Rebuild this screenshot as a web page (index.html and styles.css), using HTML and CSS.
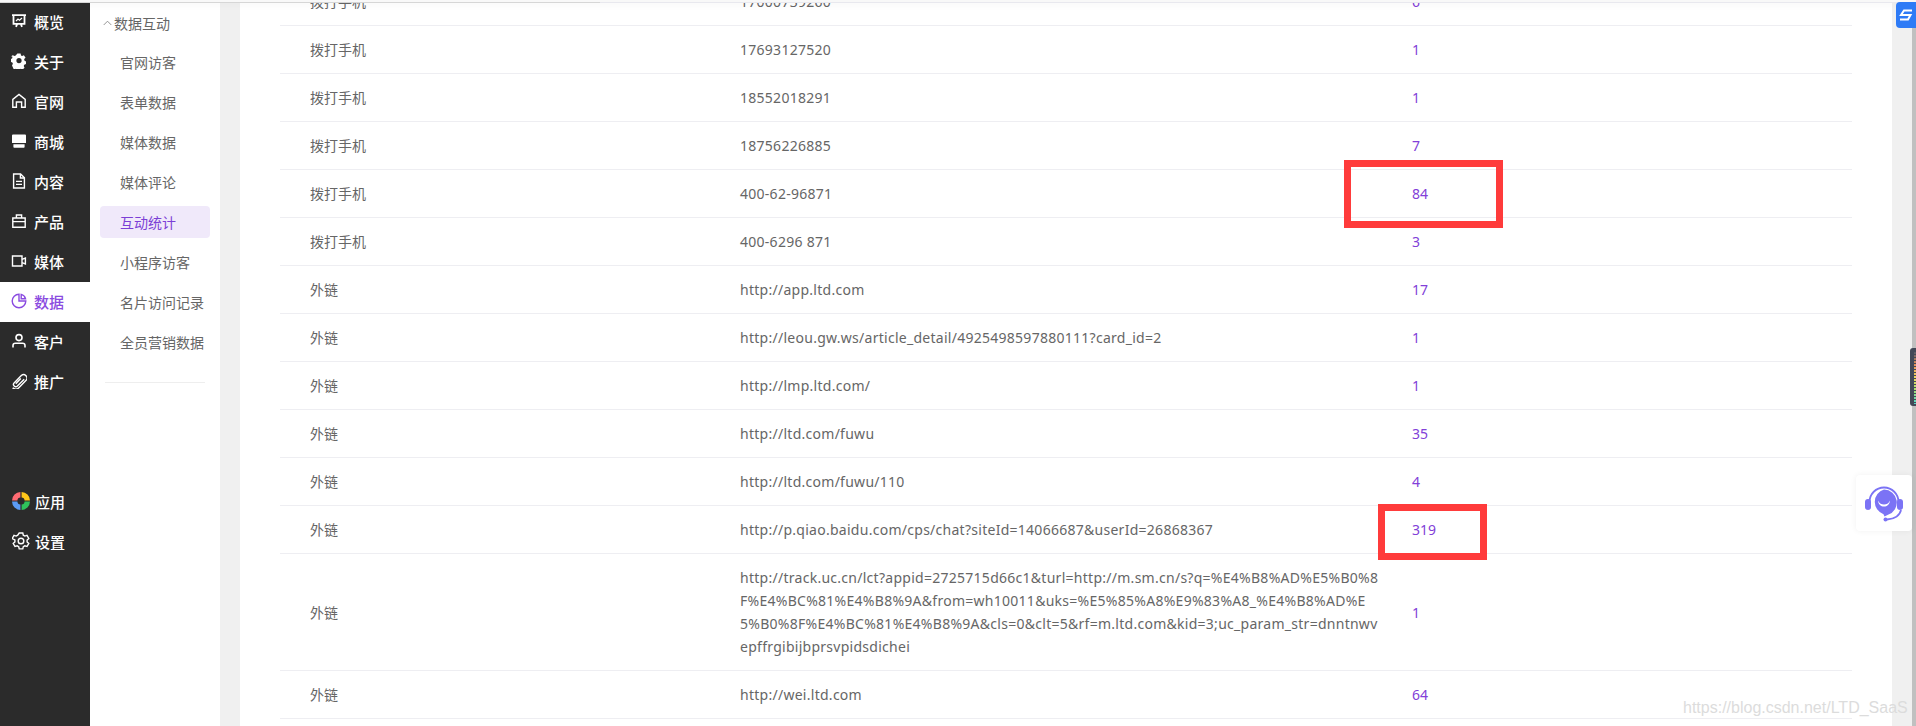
FILE: index.html
```html
<!DOCTYPE html>
<html lang="zh-CN">
<head>
<meta charset="utf-8">
<title>互动统计</title>
<link rel="stylesheet" href="styles.css">
</head>
<body>
<div class="app">
  <nav class="rail">
    <ul class="rail-list">
      <li class="rail-item"><svg class="ico" viewBox="0 0 16 16" fill="none" stroke="currentColor" stroke-width="1.8"><path d="M1 2.200h14M2.500 2.200v8.600h11V2.200M5 13.800l1.200-3M11 13.800l-1.200-3"/><path d="M5 8l2-2 1.500 1.200L11 5" stroke-width="1.200"/></svg><span>概览</span></li>
      <li class="rail-item"><svg class="ico" viewBox="0 0 16 16"><path fill="currentColor" fill-rule="evenodd" d="M6.200 0h3.600l.5 2.200 1.200.6 2.100-.9 1.900 2.800-1.600 1.600.2 1.700 1.900 1v3l-2 .8-.6 1.400.9 2-2.300 2.200-2-1-1.400.5-.8 2H6.200l-.6-2-1.400-.5-2 1L0 13.600l1-2-.6-1.400-2-.8v-3l1.900-1 .2-1.700L-1 3.100.9 1.900 3 2.800l1.200-.6zM8 5a3 3 0 1 0 0 6 3 3 0 0 0 0-6z" transform="translate(1 .6) scale(.875)"/></svg><span>关于</span></li>
      <li class="rail-item"><svg class="ico" viewBox="0 0 16 16" fill="none" stroke="currentColor" stroke-width="1.400"><path d="M1.800 14.200V6.400L8 1.400l6.200 5v7.800h-3.600V9H5.400v5.200z"/></svg><span>官网</span></li>
      <li class="rail-item"><svg class="ico" viewBox="0 0 16 16"><path fill="currentColor" d="M2 1.500h12a1 1 0 0 1 1 1v7.400H1V2.500a1 1 0 0 1 1-1zM2.400 11.200h11.200V14a.8.8 0 0 1-.8.8H3.200a.8.8 0 0 1-.8-.8z"/></svg><span>商城</span></li>
      <li class="rail-item"><svg class="ico" viewBox="0 0 16 16" fill="none" stroke="currentColor" stroke-width="1.400"><path d="M2.600 1h7l3.800 3.800V15H2.600z"/><path d="M9.400 1v4h4M5 8.400h6M5 11.400h6"/></svg><span>内容</span></li>
      <li class="rail-item"><svg class="ico" viewBox="0 0 16 16" fill="none" stroke="currentColor" stroke-width="1.400"><path d="M1.800 5h12.400v9.200H1.800zM1.800 8.600h12.400M5.400 5V2h5.200v3"/></svg><span>产品</span></li>
      <li class="rail-item"><svg class="ico" viewBox="0 0 16 16" fill="none" stroke="currentColor" stroke-width="1.400"><path d="M1.500 3h9.500v10H1.500z"/><path d="M11 6.400l3.400-1.400v6L11 9.600"/></svg><span>媒体</span></li>
      <li class="rail-item is-active"><svg class="ico" viewBox="0 0 16 16" fill="none" stroke="currentColor" stroke-width="1.400"><path d="M8 1.200a6.800 6.800 0 1 0 6.800 6.800H8z"/><path d="M10.200 1.400a6 6 0 0 1 4.300 4.300h-4.300z"/></svg><span>数据</span></li>
      <li class="rail-item"><svg class="ico" viewBox="0 0 16 16" fill="none" stroke="currentColor" stroke-width="1.600"><circle cx="8" cy="4.600" r="3"/><path d="M2 14.600v-2.200c0-1.400 1-2.200 2.400-2.200h7.200c1.400 0 2.400.8 2.400 2.200v2.200"/></svg><span>客户</span></li>
      <li class="rail-item"><svg class="ico" viewBox="0 0 16 16" fill="none" stroke="currentColor" stroke-width="1.400"><path d="M13.200 6.200l-6.800 6.900a2.300 2.300 0 0 1-3.300-3.200l7.200-7.400a3.400 3.400 0 0 1 4.800 4.800l-7.500 7.600a4 4 0 0 1-5.900-.1M9.800 5.600l-5 5.200"/></svg><span>推广</span></li>
    </ul>
    <ul class="rail-list rail-bottom">
      <li class="rail-item"><svg class="ico ico-app" viewBox="0 0 18 18"><path fill="#ff6b73" d="M8.400 0v5.400a3.200 3.200 0 0 0-3 3H0A8.600 8.600 0 0 1 8.400 0z"/><path fill="#ffc61a" d="M9.600 0A8.600 8.600 0 0 1 18 8.400h-5.400a3.200 3.200 0 0 0-3-3z"/><path fill="#5b9bf5" d="M0 9.600h5.400a3.200 3.200 0 0 0 3 3V18A8.600 8.600 0 0 1 0 9.600z"/><path fill="#2fc25b" d="M12.600 9.600H18A8.600 8.600 0 0 1 9.600 18v-5.400a3.200 3.200 0 0 0 3-3z"/></svg><span>应用</span></li>
      <li class="rail-item"><svg class="ico ico-app" viewBox="0 0 18 18" fill="none" stroke="currentColor" stroke-width="1.400"><path d="M7.200 1h3.600l.5 2.200 1.500.9 2.200-.7 1.800 3.100-1.700 1.500v1.900l1.700 1.500-1.800 3.100-2.200-.7-1.500.9-.5 2.200H7.200l-.5-2.200-1.500-.9-2.200.7-1.800-3.100 1.700-1.500V8L.2 6.500 2 3.400l2.200.7 1.500-.9z"/><circle cx="9" cy="9" r="2.800"/></svg><span>设置</span></li>
    </ul>
  </nav>

  <aside class="subnav">
    <div class="sub-title"><svg class="chev" viewBox="0 0 10 6" fill="none" stroke="currentColor"><path d="M.8 5.200L5 1l4.200 4.200"/></svg>数据互动</div>
    <ul class="sub-list">
      <li class="sub-item">官网访客</li>
      <li class="sub-item">表单数据</li>
      <li class="sub-item">媒体数据</li>
      <li class="sub-item">媒体评论</li>
      <li class="sub-item is-active">互动统计</li>
      <li class="sub-item">小程序访客</li>
      <li class="sub-item">名片访问记录</li>
      <li class="sub-item">全员营销数据</li>
    </ul>
    <hr class="sub-rule">
  </aside>

  <main class="main">
    <section class="card">
      <div class="table">
        <div class="row"><div>拨打手机</div><div>17000739260</div><div class="num">6</div></div>
        <div class="row"><div>拨打手机</div><div>17693127520</div><div class="num">1</div></div>
        <div class="row"><div>拨打手机</div><div>18552018291</div><div class="num">1</div></div>
        <div class="row"><div>拨打手机</div><div>18756226885</div><div class="num">7</div></div>
        <div class="row"><div>拨打手机</div><div>400-62-96871</div><div class="num">84</div></div>
        <div class="row"><div>拨打手机</div><div>400-6296 871</div><div class="num">3</div></div>
        <div class="row"><div>外链</div><div>http://app.ltd.com</div><div class="num">17</div></div>
        <div class="row"><div>外链</div><div>http://leou.gw.ws/article_detail/4925498597880111?card_id=2</div><div class="num">1</div></div>
        <div class="row"><div>外链</div><div>http://lmp.ltd.com/</div><div class="num">1</div></div>
        <div class="row"><div>外链</div><div>http://ltd.com/fuwu</div><div class="num">35</div></div>
        <div class="row"><div>外链</div><div>http://ltd.com/fuwu/110</div><div class="num">4</div></div>
        <div class="row"><div>外链</div><div>http://p.qiao.baidu.com/cps/chat?siteId=14066687&amp;userId=26868367</div><div class="num">319</div></div>
        <div class="row"><div>外链</div><div>http://track.uc.cn/lct?appid=2725715d66c1&amp;turl=http://m.sm.cn/s?q=%E4%B8%AD%E5%B0%8<br>F%E4%BC%81%E4%B8%9A&amp;from=wh10011&amp;uks=%E5%85%A8%E9%83%A8_%E4%B8%AD%E<br>5%B0%8F%E4%BC%81%E4%B8%9A&amp;cls=0&amp;clt=5&amp;rf=m.ltd.com&amp;kid=3;uc_param_str=dnntnwv<br>epffrgibijbprsvpidsdichei</div><div class="num">1</div></div>
        <div class="row"><div>外链</div><div>http://wei.ltd.com</div><div class="num">64</div></div>
      </div>
    </section>
  </main>

  <div class="scrollbar"></div>
</div>

<div class="topline"></div>
<div class="mark mark-a"></div>
<div class="mark mark-b"></div>

<div class="badge-s"><svg viewBox="0 0 16 16" fill="none" stroke="#fff" stroke-width="2"><path d="M14 3.500H6L3 8h9.500L10 12.500H2"/></svg></div>
<div class="side-tab"><div class="side-stripes"></div></div>
<button class="help" type="button" aria-label="客服"><svg viewBox="0 0 40 40"><path d="M5.500 19a14.500 14.500 0 0 1 29 0" fill="none" stroke="#7b73f5" stroke-width="1.800"/><rect x="1" y="16" width="6" height="11" rx="3" fill="#7b73f5"/><rect x="33" y="16" width="6" height="11" rx="3" fill="#7b73f5"/><path d="M20 6.500a13 13 0 0 1 4 25.300l-3.500 1.600-1-2.200A13 13 0 0 1 20 6.500z" fill="#7b73f5"/><path d="M14 17.500c.5 4 3 6 6 6s5.500-2 6-6c-1.500 3-3.500 4-6 4s-4.500-1-6-4z" fill="#fff"/><path d="M37 27c-1 5-6 9-14 9.500" fill="none" stroke="#7b73f5" stroke-width="1.800"/><circle cx="21.500" cy="36.500" r="2" fill="#7b73f5"/></svg></button>
<div class="watermark">https://blog.csdn.net/LTD_SaaS</div>
</body>
</html>
```

FILE: styles.css
```css
* { box-sizing: border-box; }
html, body { margin: 0; height: 100%; overflow: hidden; }
body { font-family: "Noto Sans", "Noto Sans CJK SC", sans-serif; font-size: 14px; color: #666; background: #f0f0f0; }
ul { list-style: none; margin: 0; padding: 0; }

.app { display: flex; height: 726px; }

.rail { width: 90px; flex: none; background: #2b2b2b; color: #fff; padding-top: 2px; display: flex; flex-direction: column; }
.rail-bottom { margin-top: 80px; }
.rail-item { height: 40px; display: flex; align-items: center; gap: 7px; padding: 0 0 2px 11px; font-size: 15px; font-weight: 500; }
.rail-item.is-active { background: #fff; color: #8a4be0; }
.ico { width: 16px; height: 16px; flex: none; }
.ico-app { width: 18px; height: 18px; margin-left: 1px; margin-right: -2px; }

.subnav { width: 130px; flex: none; background: #fff; padding: 2px 10px 0; }
.sub-title { height: 40px; display: flex; align-items: center; gap: 2px; padding: 2px 0 0 3px; color: #666; }
.chev { width: 9px; height: 6px; color: #888; }
.sub-item { height: 40px; display: flex; align-items: center; padding-left: 20px; color: #666; border-radius: 4px; }
.sub-item.is-active { height: 32px; margin: 4px 0; background: #f0e9fa; color: #7c3fd6; }
.sub-rule { border: 0; border-top: 1px solid #eee; margin: 20px 5px 0; }

.main { flex: 1; padding: 0 20px; min-width: 0; overflow: hidden; }
.card { background: #fff; height: 100%; padding: 0 40px; display: flex; flex-direction: column; overflow: hidden; }
.table { margin-top: -22px; }
.row { display: grid; grid-template-columns: 430px 702px 1fr; border-bottom: 1px solid #eeeef2; padding: 12px 0; line-height: 23px; align-items: center; white-space: nowrap; }
.row > div:first-child { padding-left: 30px; }
.row > div:nth-child(2) { padding-left: 30px; letter-spacing: .27px; }
.row .num { color: #8240d8; }

.scrollbar { width: 4px; flex: none; background: #c0c0c0; }

.topline { position: absolute; top: 0; left: 0; width: 100%; height: 3px; background: linear-gradient(to right, #d6d6d6 600px, #e8e8ee 600px) left bottom / 100% 1px no-repeat, #f8f8f8; box-shadow: 0 2px 6px rgba(0,0,0,.05); }
.mark { position: absolute; border: 7px solid #ff3b3b; }
.mark-a { left: 1344px; top: 160px; width: 159px; height: 68px; }
.mark-b { left: 1378px; top: 504px; width: 109px; height: 56px; }

.badge-s { position: absolute; left: 1896px; top: 2px; width: 20px; height: 26px; background: #2e7bf6; border-radius: 4px 0 0 4px; padding: 5px 2px; }
.badge-s svg { display: block; width: 16px; height: 16px; }
.side-tab { position: absolute; left: 1910px; top: 348px; width: 6px; height: 58px; padding: 4px 0 2px 4px; border-radius: 3px 0 0 3px; background: #434857; }
.side-stripes { width: 2px; height: 100%; background: repeating-linear-gradient(to bottom, transparent 0 2px, #434857 2px 3px), linear-gradient(to bottom, #555a68, #e8905a 25%, #f0d860 50%, #a8e070 72%, #50d8c8); }
.help { position: absolute; left: 1856px; top: 475px; width: 56px; height: 56px; padding: 8px; border: 0; border-radius: 4px; background: #fff; box-shadow: 0 0 6px rgba(0,0,0,.06); }
.help svg { display: block; width: 40px; height: 40px; }
.watermark { position: absolute; left: 1683px; top: 698px; font: 16px/20px "Liberation Sans", sans-serif; color: #dcdcdc; }
```
